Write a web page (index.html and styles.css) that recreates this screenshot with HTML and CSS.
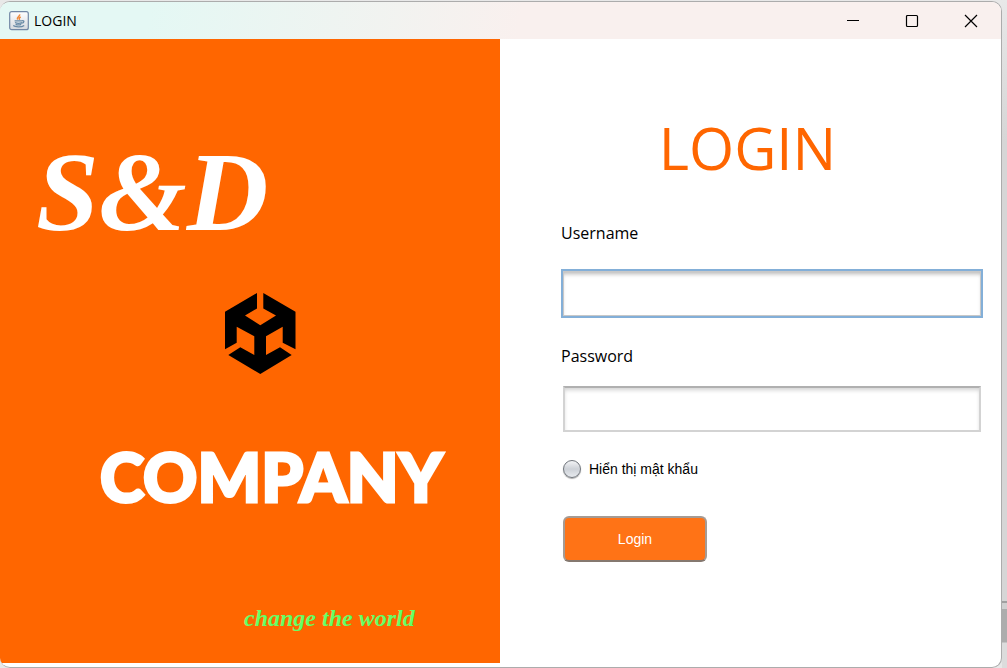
FILE: index.html
```html
<!DOCTYPE html>
<html lang="vi">
<head>
<meta charset="utf-8">
<title>LOGIN</title>
<link rel="stylesheet" href="styles.css">
</head>
<body>
<div class="window">
  <header class="titlebar">
    <svg class="app-icon" viewBox="0 0 20 20" aria-hidden="true">
      <defs><linearGradient id="tile" x1="0" y1="0" x2="0" y2="1"><stop offset="0" stop-color="#fff"/><stop offset="1" stop-color="#d5d9de"/></linearGradient></defs>
      <rect x=".7" y=".7" width="18.6" height="18" rx="2" fill="url(#tile)" stroke="#7187a5" stroke-width="1.2"/>
      <path d="M10.6 3.4c.8 1.9-3.6 2.7-2 5.2M11.7 6c-1.8.9-1.8 1.6-1 2.9" fill="none" stroke="#ef8a3c" stroke-width="1.5"/>
      <path d="M5.6 9.8h7.2M6 11.5c2 1 5 1 7 0M6.6 13.3c2 .8 4 .8 5.6 0M12.8 9.8c3-.7 2.6 2-.2 2.4M4.2 14.6c2 1.7 8.500 1.700 11-.2" fill="none" stroke="#6a8ba6" stroke-width="1.3"/>
    </svg>
    <span class="title">LOGIN</span>
    <div class="controls">
      <button class="control" type="button" aria-label="Minimize"><svg viewBox="0 0 14 14"><path d="M1 6.500h12"/></svg></button>
      <button class="control" type="button" aria-label="Maximize"><svg viewBox="0 0 14 14"><rect x="1.500" y="1.500" width="11" height="11" rx="1"/></svg></button>
      <button class="control" type="button" aria-label="Close"><svg viewBox="0 0 14 14"><path d="M1 1l12 12M13 1L1 13"/></svg></button>
    </div>
  </header>
  <main class="content">
    <section class="brand">
      <div class="brand-name">S&amp;D</div>
      <svg class="cube" viewBox="0 0 71 81" aria-hidden="true">
        <path d="M32 0V15.500L20 22.500 35.300 32.300 51 22.500 38.300 15.500V0L70.500 18.700V56.300L57.700 49.700V33.700L41 43.300V62L55 54.300 66.700 62 35.300 81 3.300 62 15.300 54.300 29.300 62V43.300L11.700 33.700V49.700L0 56.300V18.700Z"/>
      </svg>
      <div class="company">COMPANY</div>
      <div class="slogan">change the world</div>
    </section>
    <form class="login">
      <h1 class="heading">LOGIN</h1>
      <label class="label" for="username">Username</label>
      <input class="field field-active" id="username" type="text">
      <label class="label label-password" for="password">Password</label>
      <input class="field field-password" id="password" type="password">
      <div class="reveal">
        <input class="radio" id="reveal" type="radio">
        <label for="reveal">Hiển thị mật khẩu</label>
      </div>
      <button class="submit" type="button">Login</button>
    </form>
  </main>
</div>
<div class="backdrop"></div>
</body>
</html>
```
FILE: styles.css
```css
* { box-sizing: border-box; }

body {
  margin: 0;
  padding-top: 1px;
  min-height: 100vh;
  display: grid;
  grid-template-columns: 1fr 5px;
  background: #e8e8e8;
  font-family: "Open Sans", "Noto Sans", sans-serif;
  color: #000;
}

.window {
  display: flex;
  flex-direction: column;
  overflow: hidden;
  background: #fff;
  border: 1px solid #acacac;
  border-left: 0;
  border-radius: 10px;
}

.backdrop {
  background: linear-gradient(#e8e8e8 0, #d6d6d6 140px, #d6d6d6 600px, #a0a0a0 600px, #a0a0a0 602px, #d0d0d0 602px, #d0d0d0 608px, #adadad 608px, #adadad 641px, #dcdcdc 642px);
}

.titlebar {
  display: flex;
  align-items: center;
  height: 37px;
  padding-left: 9px;
  background: linear-gradient(100deg, #e4f8f4 15%, #f9f0ee 52%);
}

.app-icon { width: 20px; height: 20px; }
.title { margin-left: 5px; font-size: 14px; line-height: 20px; }
.controls { display: flex; margin-left: auto; padding-right: 1px; }

.control {
  display: grid;
  place-items: center;
  width: 59px;
  height: 36px;
  padding: 0;
  border: 0;
  background: none;
}

.control svg {
  width: 14px;
  height: 14px;
  fill: none;
  stroke: #000;
  stroke-width: 1.2;
}

.content {
  flex: 1;
  display: grid;
  grid-template-columns: 500fr 501fr;
}

.brand {
  display: flex;
  flex-direction: column;
  margin-bottom: 4px;
  padding: 93px 20px 24px 36px;
  background: #ff6600;
  color: #fff;
}

.brand-name {
  font: italic bold 113px/120px "Liberation Serif", serif;
}

.cube { width: 71px; height: 81px; margin: 41px 0 0 189px; }

.company {
  margin: 60px 0 0 64px;
  font: 900 67px/84px Lato, sans-serif;
  -webkit-text-stroke: 3px #fff;
}

.slogan {
  margin: 84px 0 0 208px;
  font: italic bold 24px/32px "Liberation Serif", serif;
  color: #66ff66;
}

.login {
  display: flex;
  flex-direction: column;
  padding: 77px 18px 0 61px;
}

.heading {
  margin: 0 49px 41px 0;
  font-size: 58px;
  font-weight: 400;
  line-height: 64px;
  text-align: center;
  color: #ff6600;
}

.label { font-size: 16px; line-height: 24px; }
.label-password { margin-top: 26px; }

.field {
  height: 46px;
  padding: 4px 10px;
  border: 2px solid #d3d3d3;
  border-top-color: #b0b0b0;
  outline: 0;
  background: #fff;
  box-shadow: inset 0 3px 4px -1px #d0d0d0;
  font-size: 16px;
}

.field-active {
  height: 49px;
  margin-top: 24px;
  border: 2px solid #83afd8;
  box-shadow: inset 0 0 0 1px #c8c8c8, inset 0 4px 4px -1px #b8b8b8;
}

.field-password { margin: 18px 2px 0; }

.reveal {
  display: flex;
  align-items: center;
  gap: 8px;
  margin: 25px 0 35px 2px;
  font: 14px/24px "Liberation Sans", sans-serif;
}

.radio {
  appearance: none;
  width: 18px;
  height: 18px;
  margin: 0;
  border: 1px solid #70757c;
  border-radius: 50%;
  background: linear-gradient(#f3f4f6, #cdd1d7 50%, #e7eaee);
  box-shadow: 0 1px 1px #aaa;
}

.submit {
  width: 144px;
  height: 46px;
  margin-left: 2px;
  border: 2px solid #a59b94;
  border-bottom-color: #85786f;
  border-radius: 6px;
  background: #ff7316;
  color: #fff;
  font: 14px/20px "Liberation Sans", sans-serif;
}
```
